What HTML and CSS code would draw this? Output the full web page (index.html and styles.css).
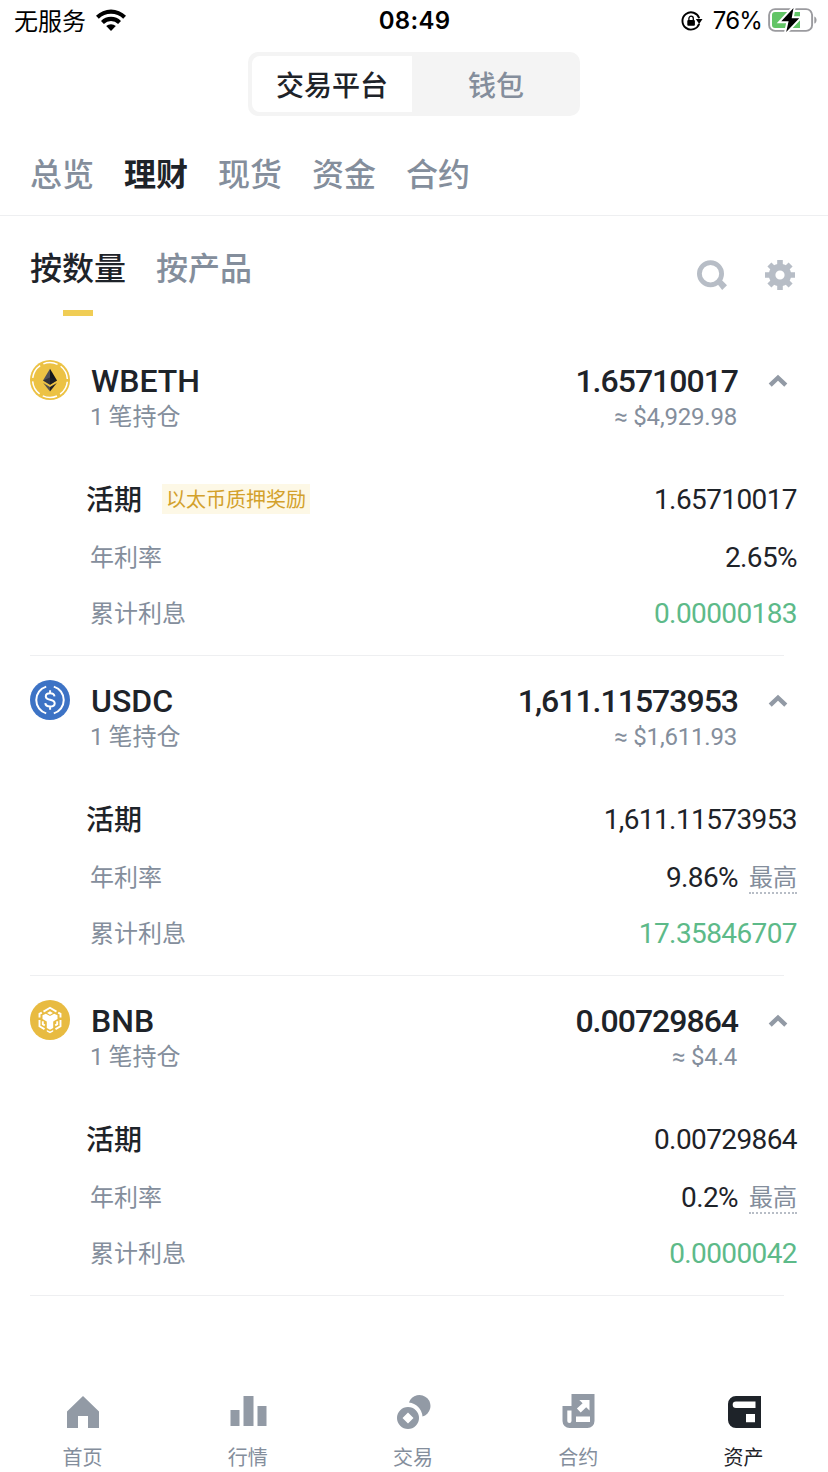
FILE: index.html
```html
<!DOCTYPE html>
<html lang="zh-CN">
<head>
<meta charset="utf-8">
<title>资产</title>
<link rel="stylesheet" href="styles.css">
</head>
<body>
<div class="app">
  <header class="status">
    <div class="status-left"><span>无服务</span>
      <svg width="30" height="22" viewBox="0 0 30 22"><path d="M0 6.7A21.5 21.5 0 0 1 30 6.7L27.2 9.7A17.3 17.3 0 0 0 2.8 9.7Z"/><path d="M5 11.9A14.2 14.2 0 0 1 25 11.9L22.1 14.9A10.2 10.2 0 0 0 7.9 14.9Z"/><path d="M10.2 17.1A7 7 0 0 1 19.8 17.1L15 21.9Z"/></svg>
    </div>
    <div class="clock">08:49</div>
    <div class="status-right">
      <svg width="22" height="20" viewBox="0 0 22 20"><path d="M18.2 12.7A8.6 8.6 0 1 1 18.2 7.2" fill="none" stroke="#000" stroke-width="1.9"/><path d="M14.8 8.1h6.7l-3.3 5z"/><rect x="6.3" y="9" width="7.6" height="5.8" rx="1"/><path d="M7.9 9.5V7.4a2.2 2.2 0 0 1 4.400 0v2.100" fill="none" stroke="#000" stroke-width="1.3"/></svg>
      <span class="percent">76%</span>
      <svg width="50" height="26" viewBox="0 0 50 26"><rect x="1.1" y="2.1" width="43" height="21.8" rx="6" fill="#fff" stroke="#9b9b9f" stroke-width="1.9"/><path d="M46.3 9.400c3 1 3 6.200 0 7.200z" fill="#9b9b9f"/><path d="M7 5h25v16H7a3 3 0 0 1-3-3V8a3 3 0 0 1 3-3z" fill="#62c466"/><path d="M25.5 1 13.3 14.200h7.300L18.200 25 31.200 11.200h-7.500z" fill="#000" stroke="#fff" stroke-width="4" paint-order="stroke"/></svg>
    </div>
  </header>

  <div class="segmented"><div class="segment segment-on">交易平台</div><div class="segment">钱包</div></div>

  <nav class="tabs"><span>总览</span><span class="on">理财</span><span>现货</span><span>资金</span><span>合约</span></nav>

  <section class="filter">
    <div class="filter-tab on">按数量</div><div class="filter-tab">按产品</div>
    <div class="tools">
      <svg width="30" height="30" viewBox="0 0 30 30"><circle cx="13.5" cy="13.7" r="11.1" fill="none" stroke="#b7bdc6" stroke-width="4.8"/><path d="M19.500 22.800 23.500 18.800 30 25.200 25.200 30Z" fill="#b7bdc6"/></svg>
      <svg width="30" height="30" viewBox="0 0 30 30"><g fill="#b7bdc6"><path fill-rule="evenodd" d="M15 3.800a11.200 11.200 0 1 0 0 22.400 11.200 11.200 0 0 0 0-22.400ZM15 10.400a4.600 4.600 0 1 1 0 9.200 4.600 4.600 0 0 1 0-9.200Z"/><path d="M12.200 0h5.600v6h-5.600zM12.200 24h5.600v6h-5.600zM0 12.200h6v5.600H0zM24 12.200h6v5.600h-6z"/><path d="m2.400 6.400 4-4L10 6l-4 4zM23.600 2.400l4 4L24 10l-4-4zM2.400 23.600l4 4L10 24l-4-4zM23.600 27.600l4-4L24 20l-4 4z"/></g></svg>
    </div>
  </section>

  <main class="assets">
    <article class="asset">
      <svg class="coin" width="40" height="40" viewBox="0 0 40 40"><circle cx="20" cy="20" r="20" fill="#ecc244"/><circle cx="20" cy="20" r="17.4" fill="none" stroke="#fff" stroke-width="1.5" stroke-dasharray="14.6 3.62" stroke-dashoffset="-1.8"/><path d="M20 8.800 13 20.600l7 4.100z" fill="#505057"/><path d="M20 8.800v15.900l7-4.100z" fill="#15171c"/><path d="m13 20.600 7-3.200 7 3.200-7 4.100z" fill="#1e2026" opacity=".65"/><path d="m13.200 22.900 6.800 4v4.600z" fill="#55524c"/><path d="m26.800 22.900-6.800 4v4.600z" fill="#222126"/></svg>
      <div class="head"><div class="name">WBETH</div><div class="count"><span class="one">1</span> 笔持仓</div></div>
      <div class="total"><div class="amount">1.65710017</div><div class="fiat">≈ $4,929.98</div></div>
      <svg class="chevron" width="20" height="14" viewBox="0 0 20 14"><path d="M2.200 11.200 10 3.700l7.800 7.500" fill="none" stroke="#929aa5" stroke-width="4.4"/></svg>
      <div class="details">
        <div class="row title-row"><span class="title">活期</span><span class="tag">以太币质押奖励</span><span class="value">1.65710017</span></div>
        <div class="row"><span>年利率</span><span class="value">2.65%</span></div>
        <div class="row"><span>累计利息</span><span class="value gain">0.00000183</span></div>
      </div>
    </article>

    <article class="asset">
      <svg class="coin" width="40" height="40" viewBox="0 0 40 40"><circle cx="20" cy="20" r="20" fill="#3d73c5"/><path d="M16.200 6.600a14 14 0 0 0 0 26.800M23.800 6.600a14 14 0 0 1 0 26.800" fill="none" stroke="#fff" stroke-width="2"/><path d="M24.500 16.300c-.3-2-1.900-3-4.400-3-2.600 0-4.300 1.200-4.300 3.100 0 4.700 8.900 2 8.900 6.900 0 2.100-1.800 3.300-4.600 3.300s-4.600-1.200-4.800-3.400M20.100 10.300v3M20.100 26.600v3.100" fill="none" stroke="#fff" stroke-width="2"/></svg>
      <div class="head"><div class="name">USDC</div><div class="count"><span class="one">1</span> 笔持仓</div></div>
      <div class="total"><div class="amount">1,611.11573953</div><div class="fiat">≈ $1,611.93</div></div>
      <svg class="chevron" width="20" height="14" viewBox="0 0 20 14"><path d="M2.200 11.200 10 3.700l7.800 7.500" fill="none" stroke="#929aa5" stroke-width="4.4"/></svg>
      <div class="details">
        <div class="row title-row"><span class="title">活期</span><span class="value">1,611.11573953</span></div>
        <div class="row"><span>年利率</span><span class="value">9.86%</span><span class="max">最高</span></div>
        <div class="row"><span>累计利息</span><span class="value gain">17.35846707</span></div>
      </div>
    </article>

    <article class="asset">
      <svg class="coin" width="40" height="40" viewBox="0 0 40 40"><circle cx="20" cy="20" r="20" fill="#e8bb41"/><g fill="none" stroke="#fff" stroke-width="1.900"><path d="M13.500 11.600 20 7.800l6.500 3.800M9.500 17.500v-3.600l2.300-1.300M30.500 17.500v-3.600l-2.300-1.300M9.500 20v6.200l5 2.900M30.500 20v6.200l-5 2.900M12.800 21.200v3l2 1.200M27.200 21.200v3l-2 1.200"/></g><path fill="#fff" d="m20 11.300 2.900 1.700-2.900 1.700-2.900-1.700zM12.500 15.200l3.300-1.500 4.200 2.400 4.200-2.400 3.300 1.500v3.900l-4.300 2.500v6.500L20 29.800l-3.200-1.700v-6.500l-4.300-2.500zM16.800 30l3.200 1.600 3.200-1.600v1.400L20 33.200l-3.200-1.800z"/></svg>
      <div class="head"><div class="name">BNB</div><div class="count"><span class="one">1</span> 笔持仓</div></div>
      <div class="total"><div class="amount">0.00729864</div><div class="fiat">≈ $4.4</div></div>
      <svg class="chevron" width="20" height="14" viewBox="0 0 20 14"><path d="M2.200 11.200 10 3.700l7.800 7.500" fill="none" stroke="#929aa5" stroke-width="4.4"/></svg>
      <div class="details">
        <div class="row title-row"><span class="title">活期</span><span class="value">0.00729864</span></div>
        <div class="row"><span>年利率</span><span class="value">0.2%</span><span class="max">最高</span></div>
        <div class="row"><span>累计利息</span><span class="value gain">0.0000042</span></div>
      </div>
    </article>
  </main>

  <nav class="bottom">
    <div class="dest"><svg width="40" height="40" viewBox="0 0 40 40"><path d="M20 4 36 19.500V36H25V24H15v12H4V19.500z"/></svg><span>首页</span></div>
    <div class="dest"><svg width="40" height="40" viewBox="0 0 40 40"><path d="M2.500 18h9v16h-9zM15.500 4h10v30h-10zM29.500 14h9v20h-9z"/></svg><span>行情</span></div>
    <div class="dest"><svg width="40" height="40" viewBox="0 0 40 40"><path d="M16 10.500A11 11 0 1 1 29.500 24.500 15.500 15.500 0 0 0 16 10.500Z"/><path fill-rule="evenodd" d="M15 15a11 11 0 1 0 0 22 11 11 0 0 0 0-22Zm0 5.500 5.500 5.500-5.500 5.500L9.500 26z"/></svg><span>交易</span></div>
    <div class="dest"><svg width="40" height="40" viewBox="0 0 40 40"><path d="M13.500 2h23v27a7 7 0 0 1-7 7h-18a7 7 0 0 1-7-7V14h9z"/><path fill="#fff" d="M9.300 18.500h4.200V29a2 2 0 0 1-4.200 0zM18 24.500h14V30H18zM21.300 8h10.200v10.500l-3.300-3.300-5.500 5.200-3.800-3.800 5.700-5.300z"/></svg><span>合约</span></div>
    <div class="dest current"><svg width="40" height="40" viewBox="0 0 40 40"><path fill-rule="evenodd" d="M13 4h25v32H13a8 8 0 0 1-8-8V12a8 8 0 0 1 8-8Zm0 5.500a3.300 3.300 0 0 0 0 6.600h19.500V9.500zM23 22v8.300h9V22z"/></svg><span>资产</span></div>
  </nav>
</div>
</body>
</html>
```
FILE: styles.css
```css
* { box-sizing: border-box; }
body {
  margin: 0;
  background: #fff;
  color: #1e2329;
  font-family: Roboto, "Noto Sans CJK SC", sans-serif;
  white-space: nowrap;
}
svg { display: block; flex: none; }
.app { width: 828px; height: 1472px; display: flex; flex-direction: column; overflow: hidden; }

.status {
  height: 42px;
  display: grid;
  grid-template-columns: 1fr auto 1fr;
  align-items: center;
  padding: 0 10px 0 13px;
  color: #000;
  font: 24px/40px Inter, "Noto Sans CJK SC", sans-serif;
}
.status-left { display: flex; align-items: center; gap: 10px; padding-left: 1px; }
.status-left span { padding-top: 2px; }
.status-left svg { margin-bottom: 3px; }
.clock { font-weight: 600; letter-spacing: .3px; margin-left: -2px; }
.status-right { display: flex; align-items: center; justify-content: flex-end; gap: 6px; }
.status-right > svg:first-child { margin-right: 4px; }
.status-right > svg:last-child { margin-bottom: 2px; }
.percent { letter-spacing: -.8px; }

.segmented {
  width: 332px;
  height: 64px;
  margin: 10px auto 0;
  padding: 4px;
  display: flex;
  border-radius: 10px;
  background: #f4f4f4;
  font-size: 28px;
  line-height: 62px;
  font-weight: 500;
  text-align: center;
  color: #848e9c;
}
.segment { flex: 1; height: 56px; padding-left: 4px; }
.segment-on { flex: none; width: 160px; padding: 0; background: #fff; border-radius: 8px 0 0 8px; color: #1e2329; }

.tabs {
  height: 100px;
  padding: 39px 30px 0;
  display: flex;
  gap: 30px;
  border-bottom: 1px solid #eeeff1;
  font-size: 32px;
  line-height: 40px;
  font-weight: 500;
  color: #848e9c;
}
.on { color: #1e2329; font-weight: 500; }
.tabs .on { font-weight: 700; }

.filter {
  height: 120px;
  padding: 33px 33px 0 30px;
  display: flex;
  gap: 30px;
  font-size: 32px;
  line-height: 40px;
  color: #848e9c;
  font-weight: 500;
}
.filter-tab.on::after { content: ""; display: block; width: 30px; height: 6px; margin: 21px auto 0; background: #f0cd55; }
.tools { display: flex; gap: 38px; margin: 11px 0 0 auto; }

.asset {
  height: 320px;
  margin: 0 44px 0 30px;
  padding-top: 24px;
  display: grid;
  grid-template-columns: 61px 1fr auto 47px;
  grid-template-rows: 118px auto;
  border-bottom: 1px solid #eeeff1;
}
.name, .amount { height: 42px; font-size: 32px; line-height: 42px; font-weight: 500; }
.amount { letter-spacing: -1px; margin-right: -1px; }
.count, .fiat { font-size: 24px; line-height: 30px; color: #848e9c; }
.count { margin-left: -1px; word-spacing: -1px; }
.fiat { letter-spacing: -.2px; }
.total { text-align: right; }
.chevron { margin: 14px 0 0 31px; }
.details { grid-column: 1 / -1; margin: 2px -13px 0 60px; }
.row {
  height: 36px;
  margin-bottom: 20px;
  display: flex;
  align-items: center;
  font-size: 24px;
  line-height: 36px;
  color: #848e9c;
}
.title-row { height: 40px; margin-bottom: 20px; margin-left: -4px; }
.title { padding-top: 2px; font-size: 28px; font-weight: 500; color: #1e2329; }
.tag { margin: -3px 0 0 20px; padding: 0 4px; height: 30px; font-size: 20px; line-height: 33px; background: #fdf8e6; color: #d3a12c; }
.value { margin-left: auto; font-size: 28px; letter-spacing: -.6px; color: #1e2329; }
.value.gain { color: #5dba89; }
.max { margin-left: 11px; height: 32px; line-height: 32px; border-bottom: 2px dotted #b7bdc6; }

.bottom {
  height: 104px;
  margin-top: auto;
  padding: 24px 2px 0 0;
  display: grid;
  grid-template-columns: repeat(5, 1fr);
  justify-items: center;
  font-size: 20px;
  line-height: 30px;
  color: #848e9c;
}
.dest { display: flex; flex-direction: column; align-items: center; gap: 11px; }
.dest svg { fill: #929aa5; }
.current { color: #1e2329; }
.current svg { fill: #1e2329; }
```
